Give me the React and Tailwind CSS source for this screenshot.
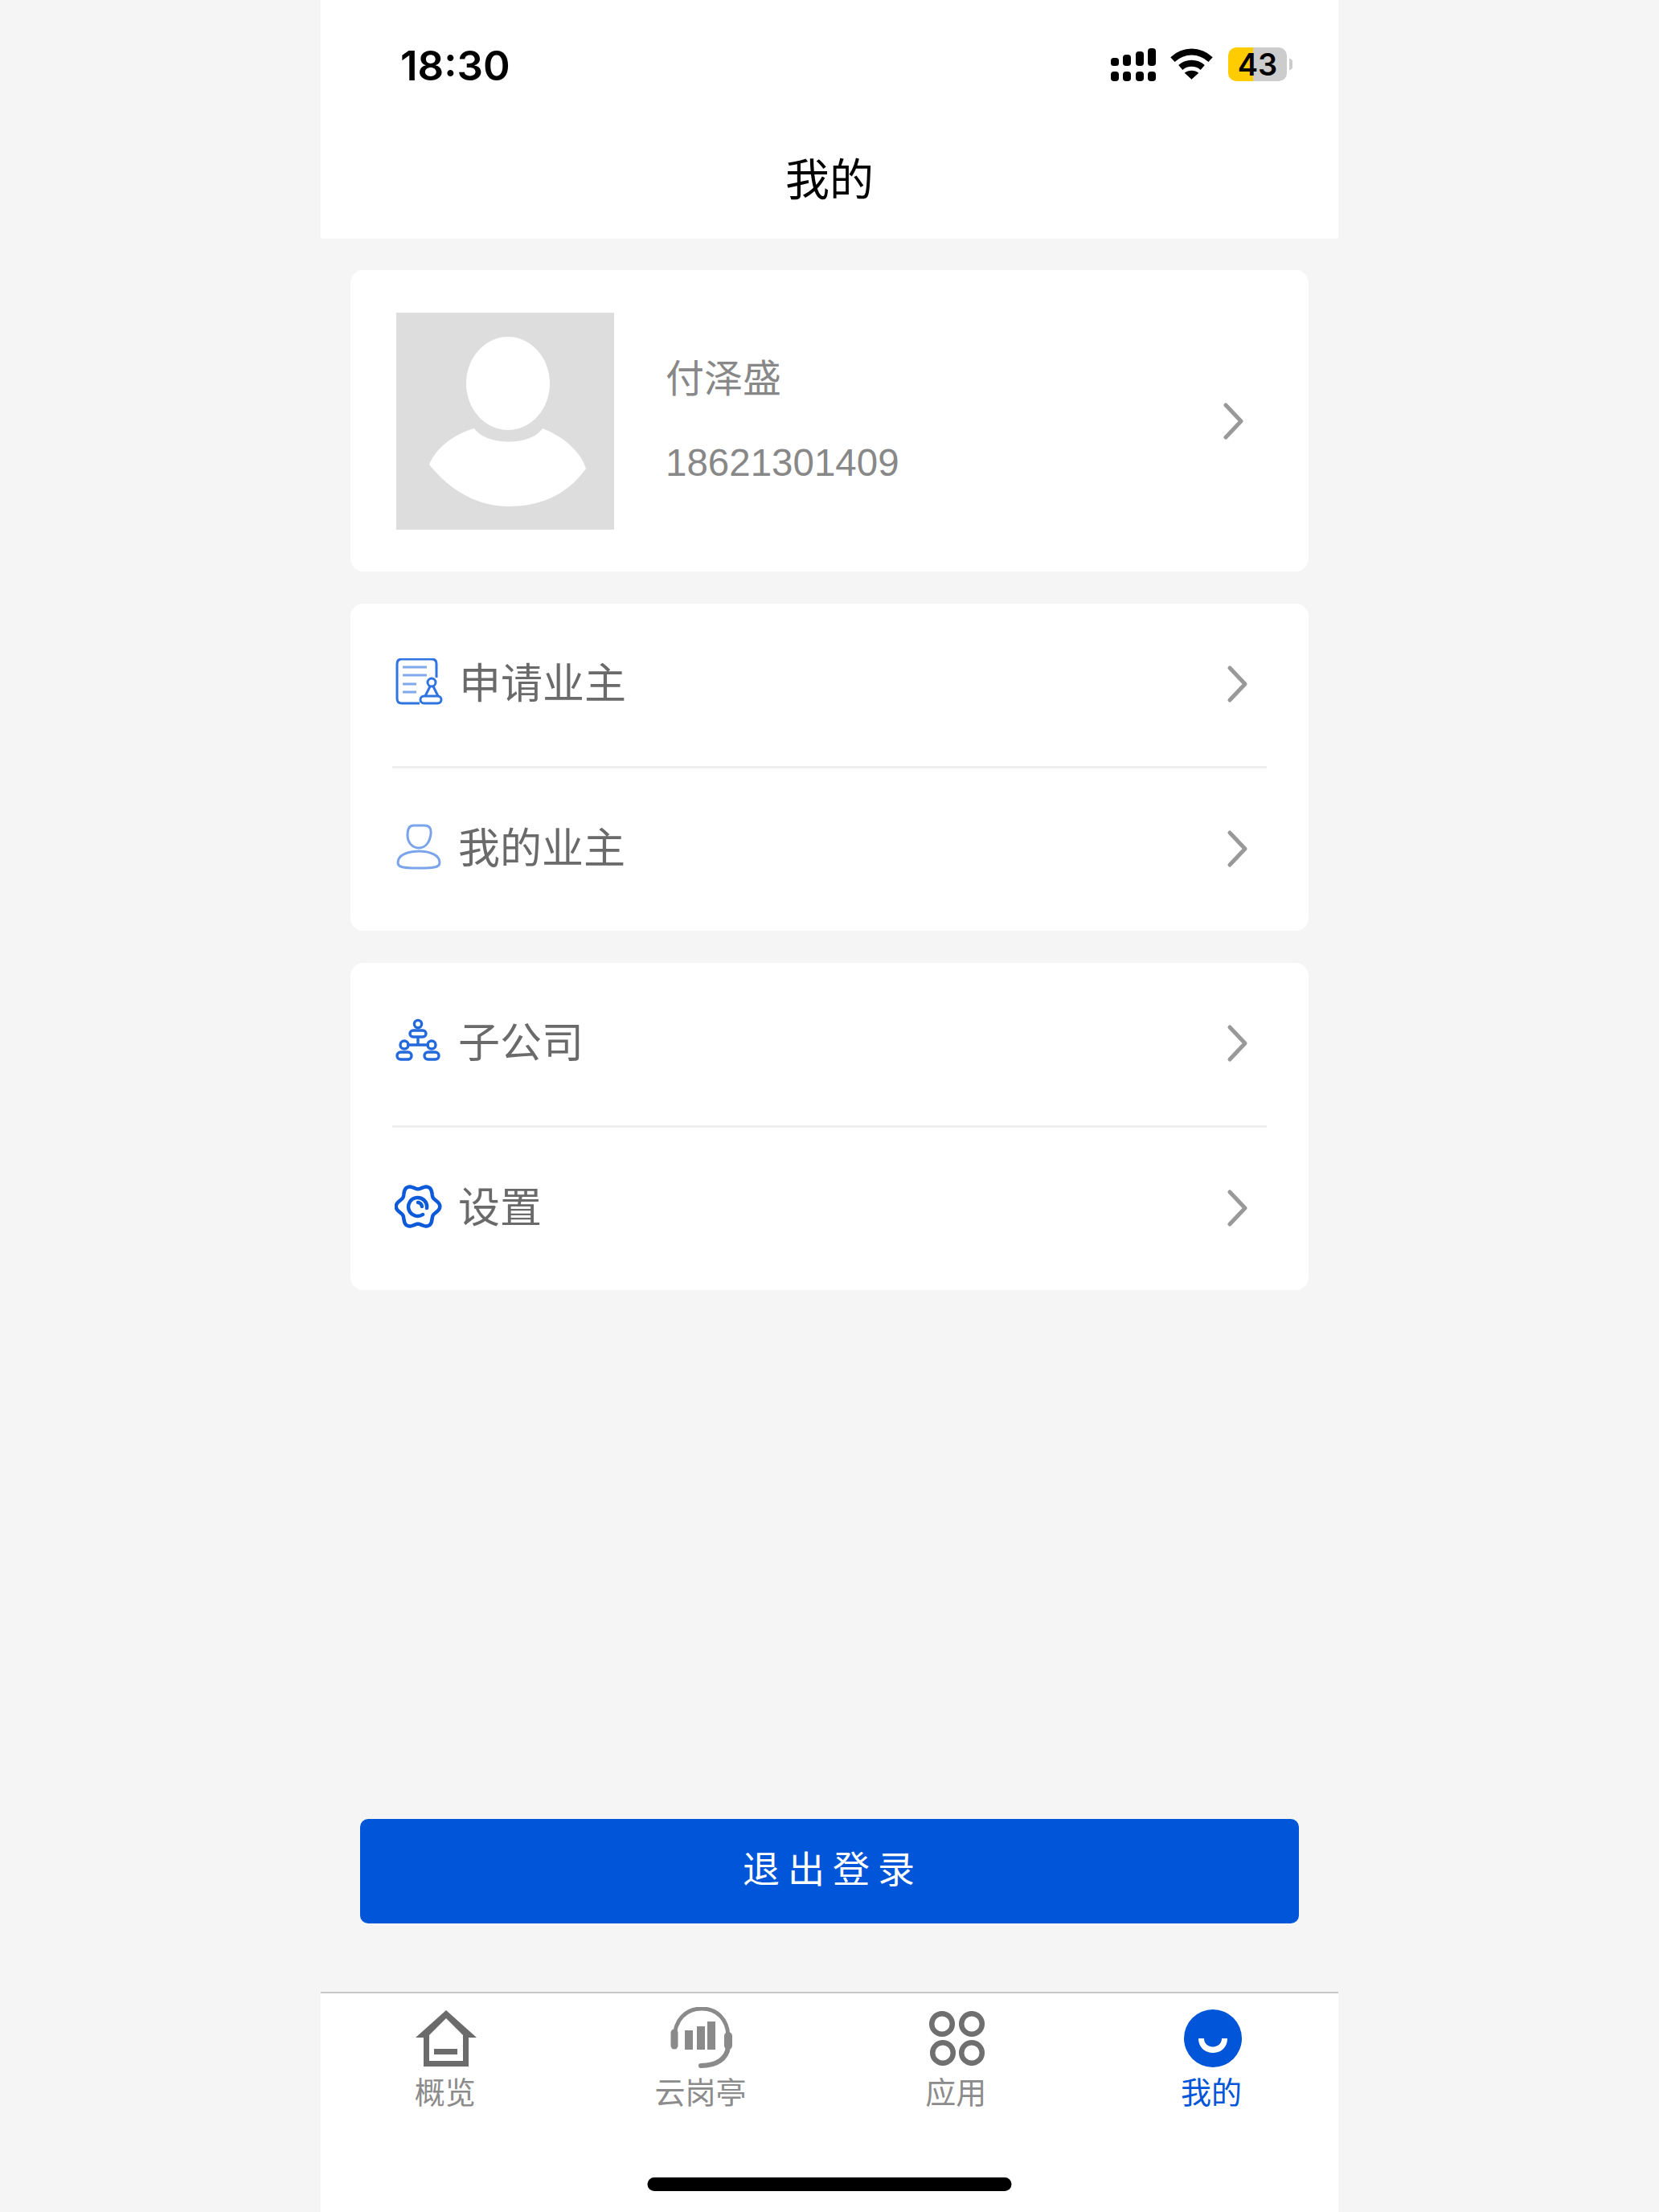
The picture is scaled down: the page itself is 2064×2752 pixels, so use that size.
const cjk = "font-['Liberation_Sans','Noto_Sans_CJK_SC',sans-serif]";

// six soft lobes around the centre of the settings icon
const gearPath =
  Array.from({ length: 120 }, (_, i) => {
    const a = (i / 120) * Math.PI * 2;
    const r = 24.5 + 2.8 * Math.cos(6 * a);
    return (i === 0 ? "M" : "L") + (30 + r * Math.cos(a)).toFixed(2) + " " + (30 + r * Math.sin(a)).toFixed(2);
  }).join(" ") + " Z";

function Arrow() {
  return (
    <svg viewBox="0 0 30 50" className="h-[50px] w-[30px]" fill="none" stroke="#999999" strokeWidth="5" strokeLinecap="round" strokeLinejoin="round">
      <path d="M6 5 L25 25 L6 45" />
    </svg>
  );
}

function ApplyIcon() {
  return (
    <svg viewBox="0 0 60 60" className="h-[60px] w-[60px]" fill="none">
      <path d="M31 56 H9 Q3 56 3 50 V7 Q3 1 9 1 H46 Q52 1 52 7 V24" stroke="#2f74e0" strokeWidth="3" />
      <path d="M10 11 H40 M10 21 H40 M10 32 H27 M10 42 H27" stroke="#7fa9ec" strokeWidth="3" />
      <circle cx="46" cy="30" r="5" stroke="#2f74e0" strokeWidth="3" />
      <path d="M44 35 L38 47 M48 35 L54 47" stroke="#2f74e0" strokeWidth="3" />
      <rect x="32" y="47" width="26" height="9" rx="4.5" stroke="#2f74e0" strokeWidth="3" />
    </svg>
  );
}

function OwnerIcon() {
  return (
    <svg viewBox="0 0 60 60" className="h-[60px] w-[60px]" fill="none" stroke="#7aa5ea" strokeWidth="3">
      <path d="M23 3 H37 Q46 3 45 13 C44 24 38 31 30 31 C22 31 16 24 16 15 C16 8 18 3 23 3 Z" />
      <path d="M4 49 C4 40 16 35 30 35 C44 35 56 40 56 49 C56 55 50 56 30 56 C10 56 4 55 4 49 Z" />
    </svg>
  );
}

function CompanyIcon() {
  return (
    <svg viewBox="1 -2 60 60" className="h-[60px] w-[60px]" fill="none" stroke="#2469dc" strokeWidth="3.4">
      <circle cx="30" cy="6" r="4.6" />
      <rect x="20" y="14" width="20" height="8" rx="4" />
      <path d="M30 22 V32 M16 32 H44" />
      <circle cx="13" cy="32" r="5" />
      <circle cx="47" cy="32" r="5" />
      <rect x="4" y="41" width="18" height="9" rx="4.5" />
      <rect x="38" y="41" width="18" height="9" rx="4.5" />
    </svg>
  );
}

function GearIcon() {
  return (
    <svg viewBox="1 0 60 60" className="h-[60px] w-[60px]" fill="none" stroke="#0d5bd8" strokeWidth="4.5" strokeLinecap="round">
      <path d={gearPath} />
      <path d="M41 32 A11.5 11.5 0 1 0 36 40" />
      <path d="M30 25 A5.5 5.5 0 0 1 35 30" />
    </svg>
  );
}

function HomeIcon() {
  return (
    <svg viewBox="0 0 76 71" className="h-[71px] w-[76px]">
      <path d="M38 0 L76 34 H66 V70 H10 V34 H0 Z M38 10 L17 31 V63 H59 V31 Z" fill="#6b6b6b" fillRule="evenodd" />
      <rect x="23" y="48" width="29" height="7" fill="#6b6b6b" />
    </svg>
  );
}

function HeadsetIcon() {
  return (
    <svg viewBox="0 0 78 78" className="h-[78px] w-[78px]" fill="none">
      <path d="M5 40 C5 15 20 2 39 2 C58 2 71 15 72 36" stroke="#8a8a8a" strokeWidth="5" strokeLinecap="round" />
      <path d="M5 32 V48" stroke="#8a8a8a" strokeWidth="9" strokeLinecap="round" />
      <path d="M72 36 V48" stroke="#8a8a8a" strokeWidth="10" strokeLinecap="round" />
      <path d="M72 50 C70 64 58 73 38 73" stroke="#8a8a8a" strokeWidth="6" strokeLinecap="round" />
      <rect x="18" y="29" width="10" height="24" fill="#8a8a8a" />
      <rect x="33" y="24" width="10" height="29" fill="#8a8a8a" />
      <rect x="46" y="18" width="10" height="35" fill="#8a8a8a" />
    </svg>
  );
}

function AppsIcon() {
  return (
    <svg viewBox="0 0 70 68" className="h-[68px] w-[70px]" fill="none" stroke="#6f6f6f" strokeWidth="6.5">
      <circle cx="16" cy="16" r="12.8" />
      <circle cx="53" cy="16" r="12.8" />
      <circle cx="17" cy="52" r="12.8" />
      <circle cx="53" cy="52" r="12.8" />
    </svg>
  );
}

function MeIcon() {
  return (
    <svg viewBox="0 0 72 72" className="h-[72px] w-[72px]">
      <circle cx="36" cy="36" r="36" fill="#0055d9" />
      <path d="M18 36 C18 60 54 60 54 36 L47 36 C47 50 25 50 25 36 Z" fill="#ffffff" />
    </svg>
  );
}

function MenuRow({ icon, label, textGap }) {
  return (
    <div className="flex h-[202px] items-center justify-between pb-[2px] pl-[55px] pr-[74px]">
      <div className="flex items-center pb-[4px]">
        {icon}
        <span className={"pt-[4px] text-[52px] leading-none text-[#6a6a6a] " + textGap}>{label}</span>
      </div>
      <Arrow />
    </div>
  );
}

const tabs = [
  { label: "概览", icon: <HomeIcon />, color: "text-[#8c8c8c]" },
  { label: "云岗亭", icon: <HeadsetIcon />, color: "text-[#8c8c8c]" },
  { label: "应用", icon: <AppsIcon />, color: "text-[#8c8c8c]" },
  { label: "我的", icon: <MeIcon />, color: "text-[#0055d9]" },
];

export default function App() {
  return (
    <div className={"flex h-[2752px] justify-center overflow-hidden bg-[#f5f5f5] " + cjk}>
      <div className="flex w-[1266px] flex-col">
        <header className="h-[297px] bg-white">
          <div className="flex h-[160px] items-center justify-between pl-[99px] pr-[57px]">
            <span className="pt-[3px] font-['Inter',sans-serif] text-[51px] font-semibold leading-none text-black">18:30</span>
            <div className="flex items-center">
              <svg viewBox="0 0 57 41" className="h-[41px] w-[57px]" fill="#000">
                <rect x="0" y="12" width="10" height="10" rx="3.5" />
                <rect x="15" y="8" width="10" height="14" rx="4" />
                <rect x="31" y="4" width="10" height="18" rx="4" />
                <rect x="46" y="0" width="10" height="22" rx="4" />
                <rect x="0" y="29" width="10" height="12" rx="4" />
                <rect x="15" y="29" width="10" height="12" rx="4" />
                <rect x="31" y="29" width="10" height="12" rx="4" />
                <rect x="46" y="29" width="10" height="12" rx="4" />
              </svg>
              <svg viewBox="0 0 54 40" className="ml-[17px] h-[40px] w-[53px]" fill="none" stroke="#000" strokeWidth="8">
                <path d="M3 14 C17 1 37 1 51 14" />
                <path d="M13 24 C21 17 33 17 41 24" />
                <path d="M27 39 L18 31 C23 27 31 27 36 31 Z" fill="#000" stroke="none" />
              </svg>
              <div className="ml-[19px] flex items-center gap-[3px]">
                <div className="flex h-[42px] w-[73px] items-center justify-center rounded-[10px] bg-[linear-gradient(90deg,#ffcc00_0,#ffcc00_42%,#cccccc_42%,#cccccc_100%)] font-['Inter',sans-serif] text-[38px] font-semibold leading-none text-black">
                  43
                </div>
                <div className="h-[14px] w-[4px] rounded-r-full bg-[#cccccc]" />
              </div>
            </div>
          </div>
          <div className="flex h-[126px] items-center justify-center pt-[3px] text-[55px] leading-none text-black">我的</div>
        </header>

        <main className="flex flex-1 flex-col gap-[40px] px-[37px] pt-[39px]">
          <section className="flex h-[375px] items-center justify-between rounded-[16px] bg-white pl-[57px] pr-[79px]">
            <div className="flex items-center gap-[64px]">
              <svg viewBox="0 0 271 270" className="h-[270px] w-[271px]">
                <rect width="271" height="270" fill="#dddddd" />
                <ellipse cx="139" cy="88" rx="52" ry="58" fill="#ffffff" />
                <path d="M97 144 C112 166 168 166 182 144 C212 156 230 175 236 194 C210 230 175 241 140 241 C105 241 70 225 41 189 C50 168 70 152 97 144 Z" fill="#ffffff" />
              </svg>
              <div className="flex flex-col gap-[56px] text-[#888888]">
                <span className="text-[48px] leading-none">付泽盛</span>
                <span className="text-[47.5px] leading-none">18621301409</span>
              </div>
            </div>
            <Arrow />
          </section>

          <section className="flex flex-col rounded-[16px] bg-white">
            <MenuRow icon={<ApplyIcon />} label="申请业主" textGap="ml-[20px]" />
            <div className="mx-[52px] h-[3px] bg-[#efefef]" />
            <MenuRow icon={<OwnerIcon />} label="我的业主" textGap="ml-[19px]" />
          </section>

          <section className="flex flex-col rounded-[16px] bg-white">
            <MenuRow icon={<CompanyIcon />} label="子公司" textGap="ml-[19px]" />
            <div className="mx-[52px] h-[3px] bg-[#efefef]" />
            <MenuRow icon={<GearIcon />} label="设置" textGap="ml-[19px]" />
          </section>

          <div className="mt-auto px-[12px] pb-[85px]">
            <button className="flex h-[130px] w-full items-center justify-center rounded-[10px] bg-[#0055d9] pb-[4px] pl-[8px] text-[46px] tracking-[10px] text-white">
              退出登录
            </button>
          </div>
        </main>

        <nav className="relative h-[274px] border-t-[2px] border-[#c8c8c8] bg-white">
          <div className="-ml-[4px] grid w-[1271px] grid-cols-4 pt-[17px]">
            {tabs.map((t) => (
              <div key={t.label} className="flex flex-col items-center">
                <div className="flex h-[78px] items-center justify-center pl-[3px]">{t.icon}</div>
                <span className={"mt-[10px] text-[38px] leading-none " + t.color}>{t.label}</span>
              </div>
            ))}
          </div>
          <div className="absolute bottom-[26px] left-1/2 h-[17px] w-[453px] -translate-x-1/2 rounded-full bg-black" />
        </nav>
      </div>
    </div>
  );
}
